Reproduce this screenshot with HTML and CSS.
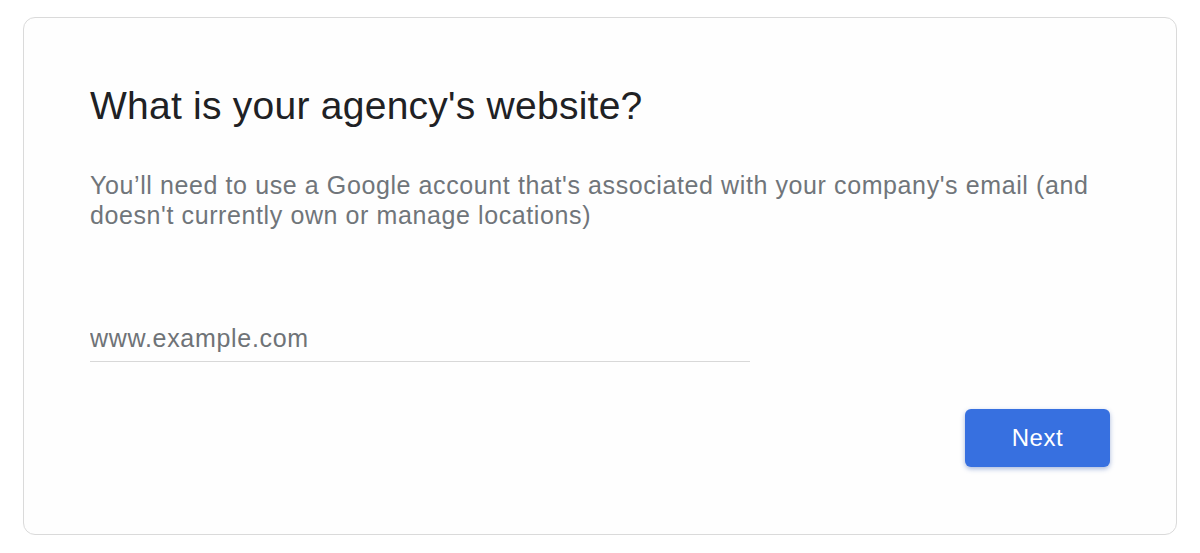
FILE: index.html
```html
<!DOCTYPE html>
<html>
<head>
<meta charset="utf-8">
<link rel="stylesheet" href="styles.css">
</head>
<body>
<div class="page">
  <div class="card">
    <h1 class="title">What is your agency's website?</h1>
    <p class="subtitle">You’ll need to use a Google account that's associated with your company's email (and doesn't currently own or manage locations)</p>
    <div class="field">
      <input class="input" type="text" placeholder="www.example.com">
    </div>
    <div class="actions">
      <button class="btn">Next</button>
    </div>
  </div>
</div>
</body>
</html>
```
FILE: styles.css
```css
html, body {
  margin: 0;
  padding: 0;
  background: #ffffff;
  font-family: "Liberation Sans", Arial, sans-serif;
}
.page {
  padding: 17px 23px 18px 23px;
}
.card {
  box-sizing: border-box;
  height: 518px;
  border: 1.5px solid #dadada;
  border-radius: 12px;
  background: #fefefe;
  padding: 0 66px 0 66px;
  display: flex;
  flex-direction: column;
}
.title {
  margin: 65px 0 0 0;
  font-size: 39px;
  font-weight: 400;
  line-height: 46px;
  letter-spacing: 0.25px;
  color: #202124;
}
.subtitle {
  margin: 41px 0 0 0;
  font-size: 25px;
  line-height: 30px;
  letter-spacing: 0.6px;
  color: #70757a;
}
.field {
  margin-top: 93px;
  width: 660px;
  border-bottom: 1.5px solid #d8d8d8;
}
.input {
  display: block;
  width: 100%;
  box-sizing: border-box;
  border: 0;
  outline: none;
  background: transparent;
  padding: 0 0 8px 0;
  font-family: "Liberation Sans", Arial, sans-serif;
  font-size: 25px;
  line-height: 30px;
  height: 38px;
  letter-spacing: 0.7px;
  color: #202124;
}
.input::placeholder {
  color: #6f7377;
}
.actions {
  display: flex;
  justify-content: flex-end;
  margin-top: 47px;
}
.btn {
  width: 145px;
  height: 58px;
  border: 0;
  border-radius: 6px;
  background: #3770e0;
  color: #ffffff;
  font-family: "Liberation Sans", Arial, sans-serif;
  font-size: 24px;
  letter-spacing: 0.6px;
  box-shadow: 0 2px 5px rgba(40, 80, 170, 0.4);
  cursor: pointer;
}
```
